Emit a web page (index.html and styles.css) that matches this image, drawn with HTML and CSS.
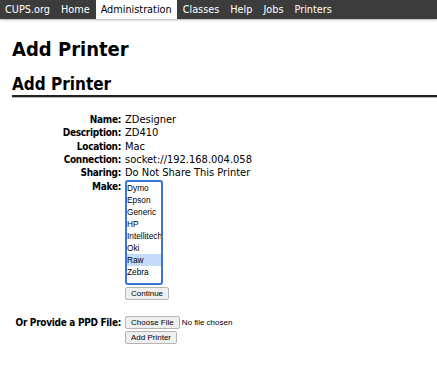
FILE: index.html
```html
<!DOCTYPE html>
<html lang="en">
<head>
    <meta charset="UTF-8">
    <title>Add Printer - CUPS</title>
    <link rel="stylesheet" href="styles.css">
</head>
<body>
    <div class="header">
        <a href="#">CUPS.org</a>
        <a href="#">Home</a>
        <a href="#" class="active">Administration</a>
        <a href="#">Classes</a>
        <a href="#">Help</a>
        <a href="#">Jobs</a>
        <a href="#">Printers</a>
    </div>

    <div class="body">
        <h1>Add Printer</h1>
        <h2 class="title">Add Printer</h2>

        <form class="printer-form">
            <table>
                <tr><th>Name:</th><td>ZDesigner</td></tr>
                <tr><th>Description:</th><td>ZD410</td></tr>
                <tr><th>Location:</th><td>Mac</td></tr>
                <tr><th>Connection:</th><td>socket://192.168.004.058</td></tr>
                <tr><th>Sharing:</th><td>Do Not Share This Printer</td></tr>
                <tr>
                    <th class="make-label">Make:</th>
                    <td>
                        <select class="make-list" size="9">
                            <option>Dymo</option>
                            <option>Epson</option>
                            <option>Generic</option>
                            <option>HP</option>
                            <option>Intellitech</option>
                            <option>Oki</option>
                            <option selected>Raw</option>
                            <option>Zebra</option>
                        </select>
                    </td>
                </tr>
                <tr><th></th><td><button type="button">Continue</button></td></tr>
                <tr class="gap"><th></th><td></td></tr>
                <tr>
                    <th class="ppd-label">Or Provide a PPD File:</th>
                    <td><input type="file"></td>
                </tr>
                <tr><th></th><td><button type="button">Add Printer</button></td></tr>
            </table>
        </form>
    </div>
</body>
</html>
```

FILE: styles.css
```css
body {
    margin: 0;
    padding: 0;
    font-family: "DejaVu Sans Condensed", "DejaVu Sans", sans-serif;
    font-stretch: condensed;
    font-size: 11px;
    color: #000;
    background-color: #fff;
}
.header {
    display: flex;
    height: 19px;
    background-color: #3c3c3c;
    box-shadow: 0 1px 2px rgba(0, 0, 0, 0.3);
}
.header a {
    display: block;
    padding: 0 5px;
    margin-right: 1px;
    line-height: 19px;
    color: #fff;
    text-decoration: none;
    font-size: 10.8px;
}
.header a.active {
    background-color: #fff;
    color: #000;
}
.body {
    padding: 0 12px;
}
h1 {
    font-size: 20px;
    font-weight: bold;
    margin: 18px 0 0;
    line-height: 24px;
}
h2.title {
    font-size: 17px;
    font-weight: bold;
    margin: 12px -12px 0 0;
    line-height: 22px;
    border-bottom: 2px solid #222;
    box-shadow: 0 1px 0 #bbb;
}
.printer-form {
    margin-top: 16px;
}
.printer-form table {
    border-collapse: collapse;
}
.printer-form th {
    text-align: right;
    vertical-align: top;
    padding: 0 4px 0 0;
    width: 109px;
    white-space: nowrap;
    font-size: 10px;
    letter-spacing: -0.3px;
    line-height: 13.3px;
}
.printer-form td {
    padding: 0;
    line-height: 13.3px;
}
.printer-form th.make-label {
    padding-top: 1px;
}
.printer-form th.ppd-label {
    padding-top: 2px;
}
.make-list {
    display: block;
    width: 38px;
    height: 105px;
    font-family: "Liberation Sans", Arial, sans-serif;
    font-size: 8.3px;
    border: 2px solid #3b73d6;
    border-radius: 3px;
    padding: 0;
    margin: 1px 0 1px;
    outline: none;
    overflow: hidden;
}
.make-list option {
    padding: 1px 0;
}
.make-list option:checked {
    background: #c6dafc linear-gradient(#c6dafc, #c6dafc);
    color: #000;
}
.printer-form input[type=file] {
    font-family: "Liberation Sans", Arial, sans-serif;
    font-size: 8px;
    font-stretch: normal;
}
.printer-form button,
.printer-form input[type=file]::file-selector-button {
    background-color: #efefef;
    border: 1px solid #b5b5b5;
    border-radius: 2px;
    padding: 1px 5px;
    margin: 0 2px 0 0;
    font-family: "Liberation Sans", Arial, sans-serif;
    font-stretch: normal;
    font-size: 8px;
    line-height: 9px;
    color: #000;
}
.printer-form tr.gap td {
    height: 14px;
}
```
